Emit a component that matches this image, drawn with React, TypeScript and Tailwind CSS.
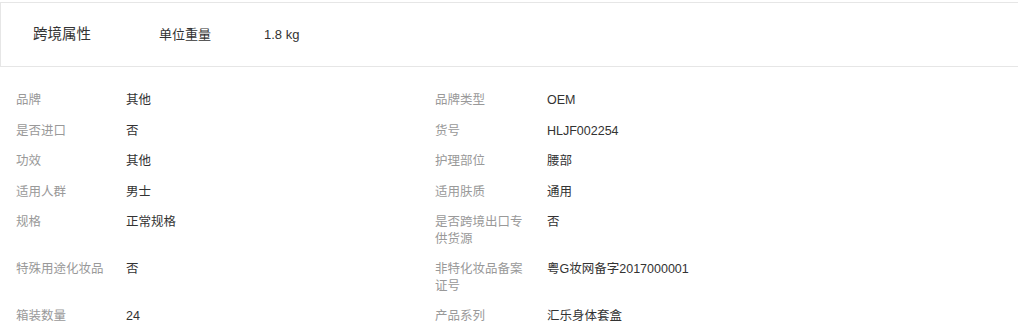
import React from "react";

type Attr = { label: string; value: string };

const rows: [Attr, Attr][] = [
  [
    { label: "品牌", value: "其他" },
    { label: "品牌类型", value: "OEM" },
  ],
  [
    { label: "是否进口", value: "否" },
    { label: "货号", value: "HLJF002254" },
  ],
  [
    { label: "功效", value: "其他" },
    { label: "护理部位", value: "腰部" },
  ],
  [
    { label: "适用人群", value: "男士" },
    { label: "适用肤质", value: "通用" },
  ],
  [
    { label: "规格", value: "正常规格" },
    { label: "是否跨境出口专供货源", value: "否" },
  ],
  [
    { label: "特殊用途化妆品", value: "否" },
    { label: "非特化妆品备案证号", value: "粤G妆网备字2017000001" },
  ],
  [
    { label: "箱装数量", value: "24" },
    { label: "产品系列", value: "汇乐身体套盒" },
  ],
];

function Cell({ attr, labelWidth }: { attr: Attr; labelWidth: string }) {
  return (
    <div className="flex">
      <div className={`${labelWidth} shrink-0 pr-[20px] text-[#999999]`}>{attr.label}</div>
      <div className="text-[#333333]">{attr.value}</div>
    </div>
  );
}

export default function App() {
  return (
    <div
      className="w-[1018px] h-[335px] overflow-hidden bg-white"
      style={{ fontFamily: '"Liberation Sans", Arial, "Noto Sans CJK SC", sans-serif' }}
    >
      <div className="mt-[2px] w-[1030px] h-[65px] border border-[#e6e6e6] flex items-center text-[#333333]">
        <div className="w-[158px] pl-[32px] text-[14.5px]">跨境属性</div>
        <div className="w-[105px] text-[13px]">单位重量</div>
        <div className="text-[13px]">1.8 kg</div>
      </div>
      <div className="mt-[18px] pl-[16px] text-[12.5px] leading-[16.5px]">
        {rows.map((pair, i) => (
          <div key={i} className="grid grid-cols-[419px_1fr] py-[7px]">
            <Cell attr={pair[0]} labelWidth="w-[110px]" />
            <Cell attr={pair[1]} labelWidth="w-[112px]" />
          </div>
        ))}
      </div>
    </div>
  );
}
